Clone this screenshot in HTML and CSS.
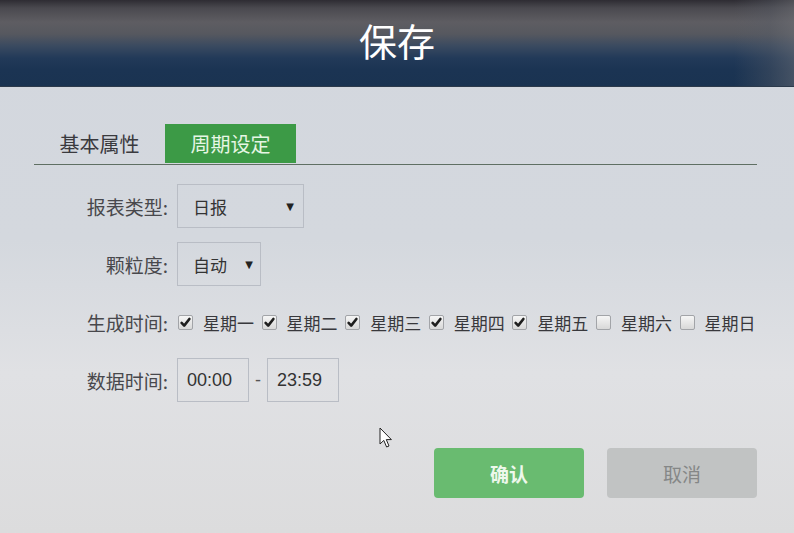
FILE: index.html
```html
<!DOCTYPE html>
<html lang="zh-CN">
<head>
<meta charset="utf-8">
<title>保存</title>
<link rel="stylesheet" href="styles.css">
</head>
<body>
<div class="page">
  <header class="titlebar"><h1 class="title">保存</h1></header>
  <main class="content">
    <nav class="tabs">
      <div class="tab">基本属性</div>
      <div class="tab tab-active">周期设定</div>
    </nav>
    <form class="form">
      <div class="row">
        <label class="label">报表类型:</label>
        <div class="select select-wide"><span>日报</span><span class="arrow">▼</span></div>
      </div>
      <div class="row">
        <label class="label">颗粒度:</label>
        <div class="select select-narrow"><span>自动</span><span class="arrow">▼</span></div>
      </div>
      <div class="row">
        <label class="label">生成时间:</label>
        <div class="days">
          <span class="day"><span class="box checked"><svg viewBox="0 0 14 14"><path d="M2.8 7.4 L5.6 10.4 L11.2 3.2" /></svg></span><span class="day-name">星期一</span></span>
          <span class="day"><span class="box checked"><svg viewBox="0 0 14 14"><path d="M2.8 7.4 L5.6 10.4 L11.2 3.2" /></svg></span><span class="day-name">星期二</span></span>
          <span class="day"><span class="box checked"><svg viewBox="0 0 14 14"><path d="M2.8 7.4 L5.6 10.4 L11.2 3.2" /></svg></span><span class="day-name">星期三</span></span>
          <span class="day"><span class="box checked"><svg viewBox="0 0 14 14"><path d="M2.8 7.4 L5.6 10.4 L11.2 3.2" /></svg></span><span class="day-name">星期四</span></span>
          <span class="day"><span class="box checked"><svg viewBox="0 0 14 14"><path d="M2.8 7.4 L5.6 10.4 L11.2 3.2" /></svg></span><span class="day-name">星期五</span></span>
          <span class="day"><span class="box"></span><span class="day-name">星期六</span></span>
          <span class="day day-last"><span class="box"></span><span class="day-name">星期日</span></span>
        </div>
      </div>
      <div class="row">
        <label class="label">数据时间:</label>
        <div class="time">00:00</div>
        <span class="dash">-</span>
        <div class="time">23:59</div>
      </div>
    </form>
    <div class="actions">
      <button class="btn btn-ok" type="button">确认</button>
      <button class="btn btn-cancel" type="button">取消</button>
    </div>
  </main>
  <svg class="cursor" viewBox="0 0 14 22" width="14" height="22"><path d="M1 1 L1 17 L4.8 13.4 L7.6 20 L10 19 L7.3 12.6 L12.4 12.6 Z" fill="#fff" stroke="#222" stroke-width="1"/></svg>
</div>
</body>
</html>
```
FILE: styles.css
```css
html, body {
  margin: 0;
  padding: 0;
}
body {
  width: 794px;
  height: 533px;
  overflow: hidden;
  font-family: "Noto Sans CJK SC", "Noto Sans", sans-serif;
  background: linear-gradient(180deg, #d3d7de 0%, #d4d8de 45%, #dcdee2 62%, #e0e1e4 70%, #dcdcdd 100%);
}
.page {
  position: relative;
  height: 533px;
}
.titlebar {
  height: 86px;
  border-bottom: 1px solid #2c3a4b;
  background: linear-gradient(180deg, #2e2c33 0px, #4a494f 8px, #5e5d62 22px, #56585f 34px, #3a4a60 46px, #223a59 58px, #1b3453 70px, #1a3351 86px);
  position: relative;
  display: flex;
  align-items: center;
  justify-content: center;
}
.titlebar::after {
  content: "";
  position: absolute;
  top: 0;
  right: 0;
  width: 60px;
  height: 86px;
  background: linear-gradient(90deg, rgba(90,95,105,0) 0%, rgba(90,95,105,0.35) 60%, rgba(110,112,118,0.5) 100%);
}
.title {
  margin: 0 0 6px 0;
  font-weight: 400;
  font-size: 38px;
  color: #ffffff;
  line-height: 1;
}
.content {
  padding: 37px 37px 0 34px;
}
.tabs {
  display: flex;
  border-bottom: 1px solid #5f6f63;
  height: 40px;
  width: 723px;
}
.tab {
  width: 131px;
  height: 39px;
  display: flex;
  align-items: center;
  justify-content: center;
  font-size: 20px;
  color: #3a3a3e;
}
.tab-active {
  background: #3c9a46;
  color: #e6f6e4;
}
.form {
  display: flex;
  flex-direction: column;
  gap: 14px;
  margin-top: 19px;
}
.row {
  display: flex;
  align-items: center;
  height: 44px;
}
.label {
  flex: none;
  width: 134px;
  text-align: right;
  font-size: 19px;
  color: #48484c;
  margin-right: 9px;
  white-space: nowrap;
}
.select {
  box-sizing: border-box;
  flex: none;
  height: 44px;
  border: 1px solid #b9bdc5;
  display: flex;
  align-items: center;
  justify-content: space-between;
  padding: 0 9px 0 15px;
  font-size: 17px;
  color: #333;
}
.select-wide { width: 127px; }
.select-narrow { width: 84px; padding-right: 7px; }
.arrow {
  font-size: 10px;
  color: #222;
  font-family: "DejaVu Sans", sans-serif;
}
.days {
  flex: none;
  display: flex;
  align-items: center;
  margin-left: 1px;
}
.day {
  flex: none;
  display: flex;
  align-items: center;
  width: 83.6px;
}
.day-last {
  width: auto;
}
.box {
  box-sizing: border-box;
  flex: none;
  width: 15px;
  height: 15px;
  border: 1px solid #a2a4a8;
  border-radius: 2px;
  background: linear-gradient(180deg, #f6f6f6, #d8d8d8);
  margin-right: 10px;
  display: flex;
  align-items: center;
  justify-content: center;
}
.box svg {
  width: 13px;
  height: 13px;
}
.box path {
  fill: none;
  stroke: #1e1e1e;
  stroke-width: 2.8;
  stroke-linecap: round;
  stroke-linejoin: round;
}
.day-name {
  font-size: 17px;
  color: #38383c;
  white-space: nowrap;
}
.time {
  box-sizing: border-box;
  flex: none;
  width: 72px;
  height: 44px;
  border: 1px solid #b9bdc5;
  padding-left: 9px;
  display: flex;
  align-items: center;
  font-family: "Liberation Sans", Arial, sans-serif;
  font-size: 18px;
  color: #333;
}
.dash {
  flex: none;
  width: 18px;
  text-align: center;
  font-family: "Liberation Sans", Arial, sans-serif;
  font-size: 18px;
  color: #555;
}
.actions {
  display: flex;
  justify-content: flex-end;
  gap: 23px;
  width: 723px;
  margin-top: 46px;
}
.btn {
  width: 150px;
  height: 50px;
  border: none;
  border-radius: 4px;
  font-family: "Noto Sans CJK SC", sans-serif;
  font-size: 19px;
  padding: 0;
}
.btn-ok {
  background: #69bb70;
  color: #eef8ec;
  font-weight: 700;
}
.btn-cancel {
  background: #c1c3c3;
  color: #858787;
}
.cursor {
  position: absolute;
  left: 379px;
  top: 427px;
}
```
